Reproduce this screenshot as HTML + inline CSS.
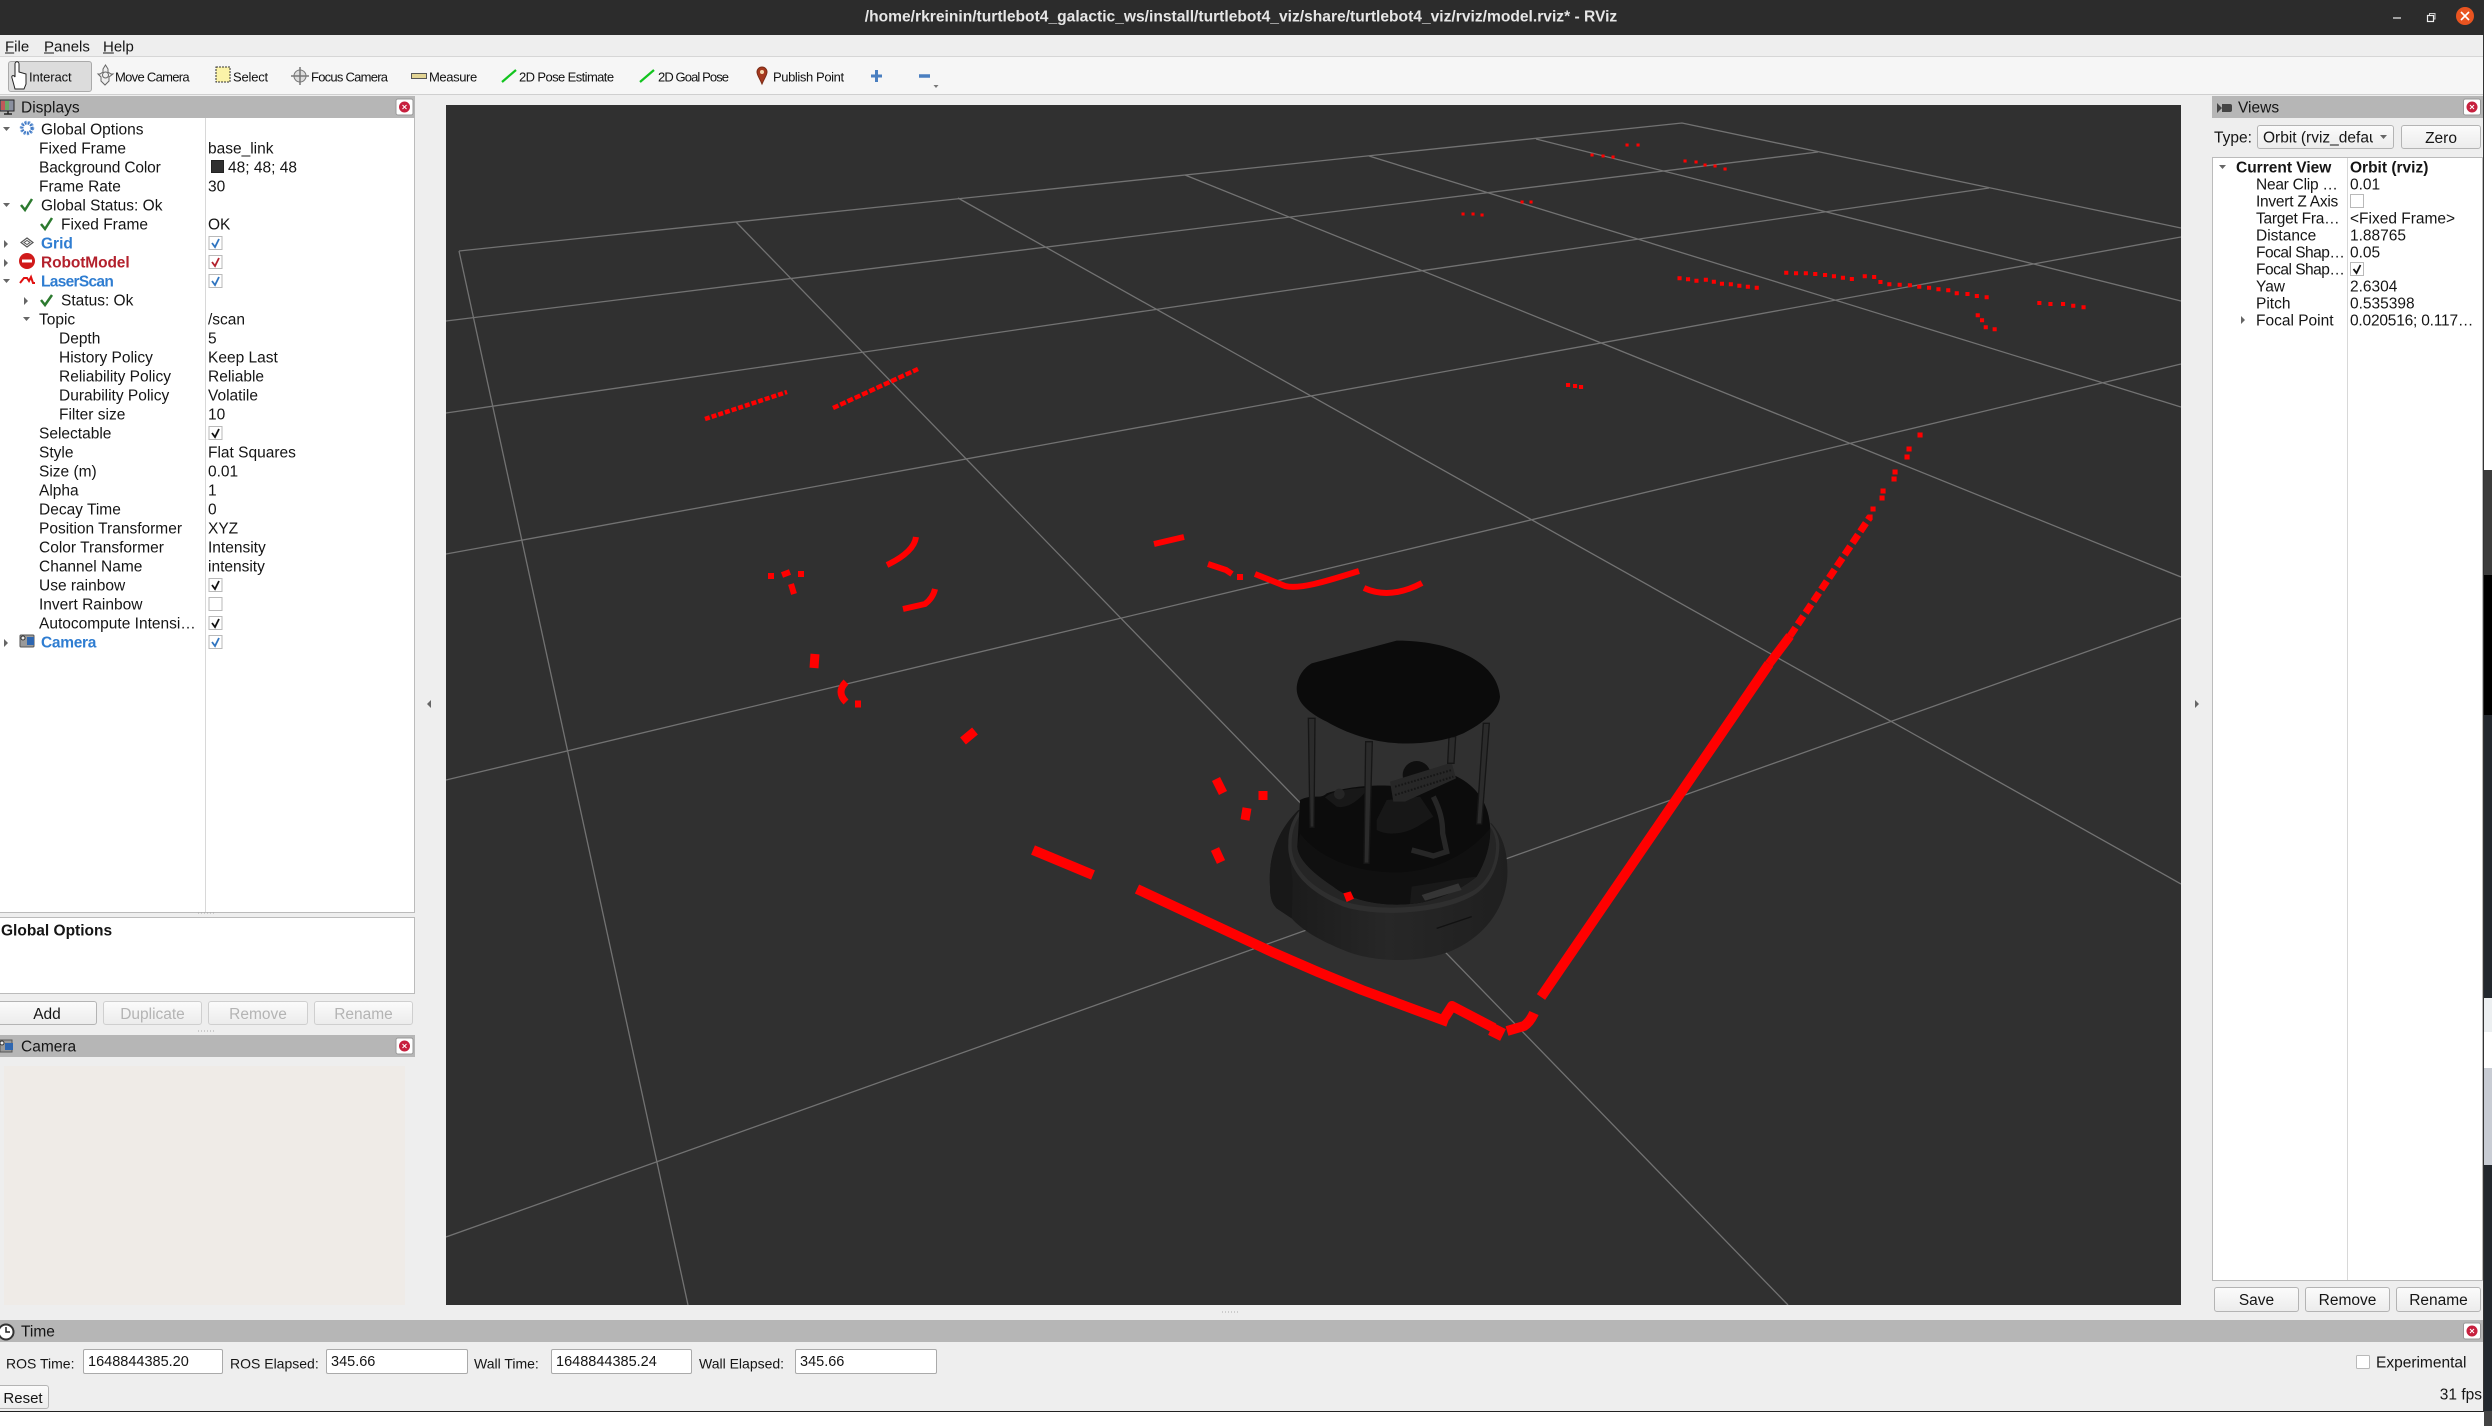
<!DOCTYPE html>
<html><head><meta charset="utf-8"><title>RViz</title>
<style>
html,body{margin:0;padding:0;background:#fff}
body{position:relative;width:2492px;height:1426px;overflow:hidden;font-family:"Liberation Sans",sans-serif}
.b{position:absolute}
.t{position:absolute;white-space:nowrap;font:15.5px/18px "Liberation Sans",sans-serif;color:#151515;transform:translateY(1.5px)}
.s{font-size:13px;line-height:16px;color:#111}
.m{font-size:15px}
.bold{font-weight:bold}
.blue{color:#2f7dd1;font-weight:bold}
.red{color:#b3202c;font-weight:bold}
.btn{position:absolute;box-sizing:border-box;border:1px solid #b4b4b4;border-radius:3px;background:linear-gradient(#fbfbfb,#ececec);text-align:center;font:15.5px/25px "Liberation Sans",sans-serif;color:#151515}
.dis{color:#b4b4b4;border-color:#cfcfcf}
.fld{position:absolute;box-sizing:border-box;height:25px;border:1px solid #aaa;border-radius:2px;background:#fff;font:14.5px/24px "Liberation Sans",sans-serif;color:#151515;padding-left:4px}
.title{position:absolute;background:#b6b6b6}
</style></head><body>

<!-- window chrome backgrounds -->
<div class="b" style="left:0;top:0;width:2484px;height:35px;background:#2c2c2c"></div>
<div class="b" style="left:0;top:35px;width:2484px;height:1376px;background:#eeeeee"></div>
<div class="b" style="left:0;top:56px;width:2484px;height:1px;background:#d6d6d6"></div>
<div class="b" style="left:0;top:57px;width:2484px;height:37px;background:#f6f6f6"></div>
<div class="b" style="left:0;top:94px;width:2484px;height:1px;background:#cfcfcf"></div>
<div class="b" style="left:0;top:1411px;width:2484px;height:1px;background:#222"></div>
<div class="b" style="left:2483px;top:35px;width:1px;height:1377px;background:#333"></div>

<!-- right desktop strip -->
<div class="b" style="left:2484px;top:470px;width:8px;height:105px;background:#3c3c3c"></div>
<div class="b" style="left:2484px;top:575px;width:8px;height:140px;background:#000"></div>
<div class="b" style="left:2484px;top:715px;width:8px;height:283px;background:#23282e"></div>
<div class="b" style="left:2484px;top:998px;width:8px;height:34px;background:#eceff1"></div>
<div class="b" style="left:2484px;top:1032px;width:8px;height:36px;background:#fff"></div>
<div class="b" style="left:2484px;top:1068px;width:8px;height:97px;background:#c8ccd4"></div>
<div class="b" style="left:2484px;top:1165px;width:8px;height:246px;background:#23282e"></div>
<div class="b" style="left:2484px;top:1411px;width:8px;height:15px;background:#444"></div>

<!-- toolbar active button -->
<div class="b" style="left:8px;top:61px;width:84px;height:31px;box-sizing:border-box;background:#dcdcdc;border:1px solid #aaa;border-radius:3px"></div>

<!-- 3D view -->
<div class="b" style="left:446px;top:105px;width:1735px;height:1200px;background:#303030"></div>

<!-- left panel -->
<div class="title" style="left:0;top:96px;width:415px;height:22px"></div>
<div class="b" style="left:0;top:118px;width:415px;height:795px;box-sizing:border-box;background:#fff;border-right:1px solid #bbb;border-bottom:1px solid #bbb"></div>
<div class="b" style="left:205px;top:118px;width:1px;height:794px;background:#d8d8d8"></div>
<div class="b" style="left:0;top:917px;width:415px;height:77px;box-sizing:border-box;background:#fff;border:1px solid #bbb;border-left:0"></div>
<div class="title" style="left:0;top:1035px;width:415px;height:22px"></div>
<div class="b" style="left:4px;top:1066px;width:401px;height:239px;background:#efebe7"></div>

<!-- right panel -->
<div class="title" style="left:2212px;top:96px;width:271px;height:22px"></div>
<div class="b" style="left:2212px;top:157px;width:271px;height:1124px;box-sizing:border-box;background:#fff;border:1px solid #bbb"></div>
<div class="b" style="left:2347px;top:158px;width:1px;height:1122px;background:#d8d8d8"></div>

<!-- time panel -->
<div class="title" style="left:0;top:1320px;width:2483px;height:22px"></div>

<!-- all graphics -->
<svg class="b" style="left:0;top:0" width="2492" height="1426" viewBox="0 0 2492 1426">
<defs>
<clipPath id="v"><rect x="446" y="105" width="1735" height="1200"/></clipPath>
<linearGradient id="g1" x1="0" x2="1" y1="0" y2="0"><stop offset="0" stop-color="#191919"/><stop offset=".5" stop-color="#272727"/><stop offset="1" stop-color="#1f1f1f"/></linearGradient>
</defs>
<g clip-path="url(#v)">
<g stroke="#727272" stroke-width="1.3" fill="none">
<path d="M459 251L1682 123L2181 228"/>
<path d="M446 321L1818 152"/>
<path d="M446 413L1989 188"/>
<path d="M446 554L2181 237"/>
<path d="M446 780L2181 364"/>
<path d="M446 1237L2181 618"/>
<path d="M459 251L688 1305"/>
<path d="M736 222L1788 1305"/>
<path d="M958 198L2181 884"/>
<path d="M1185 175L2181 577"/>
<path d="M1369 156L2181 407"/>
<path d="M1536 139L2181 301"/>
</g>

<!-- robot -->
<g transform="translate(1220 620) scale(.33333)">
<path d="M150 800C145 720 165 640 235 570L815 610C850 650 865 700 862 770C855 870 790 950 700 990C610 1030 460 1030 370 990C310 965 250 935 215 895L170 865C155 850 150 830 150 800Z" fill="url(#g1)"/>
<path d="M150 800C145 720 165 640 235 570L250 600C215 640 205 680 215 760L218 790L215 895L170 865C155 850 150 830 150 800Z" fill="#181818"/>
<path d="M205 670C200 740 250 810 370 860C480 895 680 880 770 820C820 785 840 720 838 670C835 640 820 620 810 610L240 570C215 600 205 630 205 670Z" fill="#2f2f2f"/>
<path d="M215 670C212 735 260 800 375 845C480 878 670 865 765 808C812 775 830 720 828 670C825 640 815 625 805 615L245 578C225 605 215 635 215 670Z" fill="#252525"/>
<path d="M232 680L240 540C280 520 300 540 320 520C400 495 480 495 520 498L700 465C760 490 800 540 808 600C815 640 810 700 770 770C720 810 650 845 570 852C480 860 390 840 340 800C280 760 235 720 232 680Z" fill="#0c0c0c"/>
<path d="M240 640C300 720 420 760 540 757C650 752 750 700 810 625C812 670 800 720 770 770C720 810 650 845 570 852C480 860 390 840 340 800C280 760 235 720 232 680Z" fill="#101010"/>
<path d="M570 852L575 800L730 775L770 770C720 810 650 845 570 852Z" fill="#191919"/>
<path d="M605 825L715 790L725 810L615 842Z" fill="#353535"/>
<path d="M650 925L755 890" stroke="#111" stroke-width="4" fill="none"/>
<path d="M315 532C340 510 400 505 445 503C425 535 385 568 350 560Z" fill="#181818"/>
<circle cx="358" cy="522" r="16" fill="#252525"/>
<circle cx="590" cy="465" r="42" fill="#0f0f0f"/>
<path d="M470 600L500 540L600 530L640 590L600 615C560 640 510 650 470 630Z" fill="#171717"/>
<path d="M510 485L695 428L708 475L555 545L520 545Z" fill="#272727"/>
<path d="M525 500L695 450M525 525L700 470" stroke="#161616" stroke-width="6" stroke-dasharray="5 5" fill="none"/>
<path d="M640 530C660 570 668 600 668 640L680 695L640 708L575 690" stroke="#272727" stroke-width="16" fill="none"/>
<g fill="#2b2b2b" stroke="#161616" stroke-width="4">
<path d="M265 295L285 295L282 622L270 622Z"/>
<path d="M437 365L457 365L447 730L432 730Z"/>
<path d="M687 350L707 350L702 430L683 430Z"/>
<path d="M790 310L808 310L785 612L770 612Z"/>
</g>
<path d="M275 130L530 62C610 62 680 75 740 105C800 135 835 175 840 230C838 270 790 310 730 340C670 365 600 372 540 370C460 368 380 340 320 305C270 280 230 250 230 205C232 170 250 145 275 130Z" fill="#0b0b0b"/>
<path d="M370 820L392 814L402 836L380 846Z" fill="#f00"/>
</g>

<!-- laser thick -->
<g stroke="#f00" fill="none" stroke-linejoin="round">
<path stroke-width="10" d="M1033 850L1093 875"/>
<path stroke-width="10" d="M1137 889L1272 952L1318 972L1362 990L1448 1022"/>
<path stroke-width="10" d="M1445 1017L1452 1006L1494 1028"/>
<path stroke-width="13" d="M1491 1029L1503 1035"/>
<path stroke-width="10" d="M1507 1031L1524 1026Q1530 1022 1534 1013"/>
<path stroke-width="10" d="M1541 997L1769 664"/>
<path stroke-width="9" d="M1769 664L1790 636"/>
<path stroke-width="7" stroke-dasharray="10 4" d="M1790 636L1870 517"/>
<path stroke-width="6" d="M916 537Q914 552 887 565"/>
<path stroke-width="6" d="M768 576H774M782 575L790 572M798 574H804M791 584L794 594"/>
<path stroke-width="6" d="M903 609L925 604Q933 598 935 589"/>
<path stroke-width="9" d="M815 654L814 668"/>
<path stroke-width="7" d="M846 682Q836 692 846 702"/>
<path stroke-width="7" d="M855 704H861"/>
<path stroke-width="9" d="M975 731L963 741"/>
<path stroke-width="9" d="M1216 779L1223 793M1263 791V800M1247 808L1245 820M1215 849L1221 862"/>
<path stroke-width="6" d="M1154 544L1184 537"/>
<path stroke-width="6" d="M1208 564L1226 570L1232 574"/>
<path stroke-width="6" d="M1237 577H1243"/>
<path stroke-width="6" d="M1255 574L1285 586C1300 590 1330 580 1359 571"/>
<path stroke-width="6" d="M1364 588Q1390 600 1422 583"/>
<path stroke-width="4.500" stroke-dasharray="5 2" d="M705 419L787 392"/>
<path stroke-width="4.500" stroke-dasharray="6 2" d="M833 408L918 369"/>
</g>
<!-- laser dots -->
<path stroke="#f00" fill="none" stroke-linecap="square" stroke-width="3" d="M1627 145h.1M1638 145h.1M1592 155h.1M1603 156h.1M1613 157h.1M1685 161h.1M1696 162h.1M1705 165h.1M1715 166h.1M1725 169h.1M1522 202h.1M1531 202h.1M1463 214h.1M1473 214h.1M1482 215h.1"/>
<path stroke="#f00" fill="none" stroke-linecap="square" stroke-width="4" d="M1568 385h.1M1575 386h.1M1581 387h.1M1679.5 278.3h.1M1688 279.3h.1M1696.4 280.7h.1M1705.8 279.7h.1M1713.8 281.7h.1M1721.9 283.7h.1M1730.8 284.3h.1M1739.3 285.7h.1M1747.8 286.7h.1M1756.7 287.7h.1M1786.2 272.7h.1M1796 273.3h.1M1805.8 273.3h.1M1815.2 274h.1M1825 275h.1M1833.9 276.3h.1M1842.9 277.7h.1M1851.8 279h.1M1864.7 276.3h.1M1874.1 277h.1M1880.4 282h.1M1889.3 284.3h.1M1899.6 284.7h.1M1909.8 285.3h.1M1919.2 286.7h.1M1929 287.7h.1M1938.4 289.3h.1M1948.2 290.3h.1M1956.7 293.3h.1M1967.4 294h.1M1976.8 296h.1M1986.6 297.3h.1M1977.7 315.3h.1M1982 320.3h.1M1985.7 327.3h.1M1994.6 329.3h.1M2039.3 303h.1M2050.4 304h.1M2063 304h.1M2073.2 305.7h.1M2083.5 307.3h.1"/>
<path stroke="#f00" fill="none" stroke-linecap="square" stroke-width="5" d="M1920 435h.1M1909 449h.1M1907 457h.1M1895 472h.1M1894 479h.1M1883 491h.1M1882 498h.1M1873 509h.1M1870 517h.1"/>
</g>

<!-- window buttons -->
<path d="M2393 18H2401" stroke="#eee" stroke-width="1.2"/>
<rect x="2427.5" y="15.5" width="6" height="6" fill="none" stroke="#eee" stroke-width="1.2"/>
<path d="M2429.5 15V13.5H2435V19H2433.5" fill="none" stroke="#ccc"/>
<circle cx="2465" cy="16" r="9" fill="#e95420"/>
<path d="M2461 12L2469 20M2469 12L2461 20" stroke="#fff" stroke-width="1.6"/>

<!-- toolbar icons -->
<path d="M15 89L12 78C11 75 14 75 15 77V64C15 61 19 61 19 64V72L26 74V84L24 89Z" fill="#fff" stroke="#222" stroke-width="1"/>
<path d="M105.500 65L108 69V72L111 74H113L109 77V81L105 85L101 81V77L98 74H100L103 72V69Z" fill="#eee" stroke="#666"/>
<circle cx="105.500" cy="75" r="3" fill="none" stroke="#666"/>
<rect x="216" y="67" width="14" height="15" fill="#fbf3a8" stroke="#333" stroke-dasharray="2 1"/>
<circle cx="300" cy="76" r="6" fill="#ddd" stroke="#777"/>
<path d="M300 67V85M291 76H309" stroke="#777" stroke-width="1.5"/>
<rect x="411.500" y="73.500" width="15" height="5" fill="#e2d494" stroke="#555"/>
<path d="M502 82L516 70" stroke="#12c41e" stroke-width="2.2"/>
<path d="M640 82L654 70" stroke="#12c41e" stroke-width="2.2"/>
<path d="M762 84C759 77 757 75 757 72A5 5 0 0 1 767 72C767 75 765 77 762 84Z" fill="#a5391e" stroke="#7a2c16"/>
<circle cx="762" cy="72" r="2" fill="#f4d9b0"/>
<path d="M871 76H882M876.500 70V82" stroke="#4a7fc0" stroke-width="3"/>
<path d="M919 76H930" stroke="#4a7fc0" stroke-width="3.500"/>
<path d="M933.500 85H938.500L936 88Z" fill="#777"/>

<!-- panel close buttons -->
<g>
<rect x="396" y="99" width="17" height="16" rx="2" fill="#fff" stroke="#999"/><circle cx="404.500" cy="107" r="5.500" fill="#c7203e"/>
<rect x="396" y="1038" width="17" height="16" rx="2" fill="#fff" stroke="#999"/><circle cx="404.500" cy="1046" r="5.500" fill="#c7203e"/>
<rect x="2463.500" y="99" width="17" height="16" rx="2" fill="#fff" stroke="#999"/><circle cx="2472" cy="107" r="5.500" fill="#c7203e"/>
<rect x="2463.500" y="1323" width="17" height="16" rx="2" fill="#fff" stroke="#999"/><circle cx="2472" cy="1331" r="5.500" fill="#c7203e"/>
<path d="M402.500 105L406.500 109M406.500 105L402.500 109M402.500 1044L406.500 1048M406.500 1044L402.500 1048M2470 105L2474 109M2474 105L2470 109M2470 1329L2474 1333M2474 1329L2470 1333" stroke="#fff" stroke-width="1"/>
</g>

<!-- title icons -->
<rect x="0" y="100" width="14" height="11" fill="#8a8f9f" stroke="#222"/>
<rect x="1" y="101" width="4" height="9" fill="#c05a5a"/><rect x="5" y="101" width="4" height="9" fill="#6aa86a"/>
<path d="M4 114H12M8 111V114" stroke="#222" stroke-width="1.5"/>
<path d="M0 1040H12V1052H0Z" fill="#999" stroke="#555"/><rect x="5" y="1043" width="8" height="7" fill="#2e66b0"/><circle cx="2" cy="1043" r="2" fill="#eee" stroke="#333"/>
<path d="M2217 103L2222 108L2217 113ZM2222 104H2230Q2232 104 2232 106V110Q2232 112 2230 112H2222Z" fill="#444"/>
<circle cx="6" cy="1332" r="7.500" fill="#fff" stroke="#333" stroke-width="2"/>
<path d="M6 1327V1332H10" stroke="#222" fill="none" stroke-width="1.500"/>

<!-- tree arrows -->
<path fill="#666" d="M3 127H10L6.500 131ZM3 203H10L6.500 207ZM3 279H10L6.500 283ZM23 317H30L26.500 321ZM2219 165H2226L2222.500 169Z"/>
<path fill="#666" d="M4 240V248L8 244ZM4 259V267L8 263ZM4 639V647L8 643ZM24 297V305L28 301ZM2241 316V324L2245 320Z"/>

<!-- tree icons -->
<circle cx="27" cy="128" r="5" fill="none" stroke="#3f78c4" stroke-width="3" stroke-dasharray="2 1"/>
<circle cx="27" cy="128" r="6.500" fill="none" stroke="#6b9ad6" stroke-width="1.500" stroke-dasharray="2 2"/>
<path fill="none" stroke="#2c7a2f" stroke-width="2.500" d="M21 205L25 210L32 199M41 224L45 229L52 218M41 300L45 305L52 295"/>
<path d="M27 238L33 242.500L27 247L21 242.500Z" fill="none" stroke="#555" stroke-width="1.200"/>
<path d="M24 242.500L27 240.500L30 242.500L27 244.500Z" fill="none" stroke="#555"/>
<circle cx="27" cy="261" r="8" fill="#d01a1a"/><rect x="22" y="259.500" width="10" height="3" fill="#fff"/>
<path d="M20 283L24 278H27L29 281L31 277L33 283H35" fill="none" stroke="#e01010" stroke-width="2"/>
<rect x="20" y="635" width="14" height="12" rx="1" fill="#9a9a9a" stroke="#555"/>
<rect x="27" y="637" width="7" height="8" fill="#2e66b0"/>
<circle cx="23" cy="638" r="2" fill="#eee" stroke="#333"/>

<!-- color swatch -->
<rect x="211.500" y="160.500" width="12" height="12" fill="#303030" stroke="#222"/>

<!-- checkboxes -->
<g fill="#fff" stroke="#b9b9b9">
<rect x="209" y="236.500" width="13" height="13"/><rect x="209" y="255.500" width="13" height="13"/><rect x="209" y="274.500" width="13" height="13"/>
<rect x="209" y="426.500" width="13" height="13"/><rect x="209" y="578.500" width="13" height="13"/><rect x="209" y="597.500" width="13" height="13"/>
<rect x="209" y="616.500" width="13" height="13"/><rect x="209" y="635.500" width="13" height="13"/>
<rect x="2350.500" y="194.500" width="13" height="13"/><rect x="2350.500" y="262.500" width="13" height="13"/>
<rect x="2356.500" y="1355.500" width="13" height="13" rx="1"/>
</g>
<path fill="none" stroke="#2f74c0" stroke-width="1.800" d="M212 243L215 247L219 239M212 281L215 285L219 277M212 642L215 646L219 638"/>
<path fill="none" stroke="#b3202c" stroke-width="1.800" d="M212 262L215 266L219 258"/>
<path fill="none" stroke="#111" stroke-width="1.800" d="M212 433L215 437L219 429M212 585L215 589L219 581M212 623L215 627L219 619M2353.500 269L2356.500 273L2360.500 265"/>

<!-- handles -->
<path fill="#666" d="M431 700V708L427 704ZM2195 700V708L2199 704Z"/>
<path d="M198 913H214M198 1031H214M1222 1312H1240" stroke="#aaa" stroke-dasharray="1 2"/>

<!-- combo arrow -->
<path fill="#666" d="M2380 136H2387L2383.500 140Z"/>
</svg>

<!-- title bar text -->
<div class="t bold" style="left:0;top:7px;width:2482px;text-align:center;color:#e6e6e6;font-size:15.6px">/home/rkreinin/turtlebot4_galactic_ws/install/turtlebot4_viz/share/turtlebot4_viz/rviz/model.rviz* - RViz</div>

<!-- menu -->
<div class="t m" style="left:5px;top:37px"><u>F</u>ile</div>
<div class="t m" style="left:44px;top:37px"><u>P</u>anels</div>
<div class="t m" style="left:103px;top:37px"><u>H</u>elp</div>

<!-- toolbar -->
<div class="t s" style="left:29px;top:68px;letter-spacing:-.1px">Interact</div>
<div class="t s" style="left:115px;top:68px;letter-spacing:-.7px">Move Camera</div>
<div class="t s" style="left:233px;top:68px;letter-spacing:-.2px">Select</div>
<div class="t s" style="left:311px;top:68px;letter-spacing:-.75px">Focus Camera</div>
<div class="t s" style="left:429px;top:68px;letter-spacing:-.4px">Measure</div>
<div class="t s" style="left:519px;top:68px;letter-spacing:-.6px">2D Pose Estimate</div>
<div class="t s" style="left:658px;top:68px;letter-spacing:-.9px">2D Goal Pose</div>
<div class="t s" style="left:773px;top:68px;letter-spacing:-.4px">Publish Point</div>

<!-- panel titles -->
<div class="t" style="left:21px;top:98px">Displays</div>
<div class="t" style="left:21px;top:1037px">Camera</div>
<div class="t" style="left:2238px;top:98px">Views</div>
<div class="t" style="left:21px;top:1322px">Time</div>

<!-- displays tree -->
<div class="t" style="left:41px;top:120px">Global Options</div>
<div class="t" style="left:39px;top:139px">Fixed Frame</div><div class="t" style="left:208px;top:139px">base_link</div>
<div class="t" style="left:39px;top:158px;letter-spacing:-.15px">Background Color</div><div class="t" style="left:228px;top:158px">48; 48; 48</div>
<div class="t" style="left:39px;top:177px">Frame Rate</div><div class="t" style="left:208px;top:177px">30</div>
<div class="t" style="left:41px;top:196px">Global Status: Ok</div>
<div class="t" style="left:61px;top:215px">Fixed Frame</div><div class="t" style="left:208px;top:215px">OK</div>
<div class="t blue" style="left:41px;top:234px">Grid</div>
<div class="t red" style="left:41px;top:253px;letter-spacing:-.1px">RobotModel</div>
<div class="t blue" style="left:41px;top:272px;letter-spacing:-.7px">LaserScan</div>
<div class="t" style="left:61px;top:291px">Status: Ok</div>
<div class="t" style="left:39px;top:310px">Topic</div><div class="t" style="left:208px;top:310px">/scan</div>
<div class="t" style="left:59px;top:329px">Depth</div><div class="t" style="left:208px;top:329px">5</div>
<div class="t" style="left:59px;top:348px">History Policy</div><div class="t" style="left:208px;top:348px">Keep Last</div>
<div class="t" style="left:59px;top:367px">Reliability Policy</div><div class="t" style="left:208px;top:367px">Reliable</div>
<div class="t" style="left:59px;top:386px">Durability Policy</div><div class="t" style="left:208px;top:386px">Volatile</div>
<div class="t" style="left:59px;top:405px">Filter size</div><div class="t" style="left:208px;top:405px">10</div>
<div class="t" style="left:39px;top:424px">Selectable</div>
<div class="t" style="left:39px;top:443px">Style</div><div class="t" style="left:208px;top:443px">Flat Squares</div>
<div class="t" style="left:39px;top:462px">Size (m)</div><div class="t" style="left:208px;top:462px">0.01</div>
<div class="t" style="left:39px;top:481px">Alpha</div><div class="t" style="left:208px;top:481px">1</div>
<div class="t" style="left:39px;top:500px">Decay Time</div><div class="t" style="left:208px;top:500px">0</div>
<div class="t" style="left:39px;top:519px">Position Transformer</div><div class="t" style="left:208px;top:519px">XYZ</div>
<div class="t" style="left:39px;top:538px">Color Transformer</div><div class="t" style="left:208px;top:538px">Intensity</div>
<div class="t" style="left:39px;top:557px">Channel Name</div><div class="t" style="left:208px;top:557px">intensity</div>
<div class="t" style="left:39px;top:576px">Use rainbow</div>
<div class="t" style="left:39px;top:595px">Invert Rainbow</div>
<div class="t" style="left:39px;top:614px">Autocompute Intensi…</div>
<div class="t blue" style="left:41px;top:633px;letter-spacing:-.3px">Camera</div>

<!-- description -->
<div class="t bold" style="left:1px;top:921px">Global Options</div>

<!-- left buttons -->
<div class="btn" style="left:-3px;top:1001px;width:100px;height:24px">Add</div>
<div class="btn dis" style="left:103px;top:1001px;width:99px;height:24px">Duplicate</div>
<div class="btn dis" style="left:208px;top:1001px;width:100px;height:24px">Remove</div>
<div class="btn dis" style="left:314px;top:1001px;width:99px;height:24px">Rename</div>

<!-- views panel -->
<div class="t" style="left:2214px;top:128px">Type:</div>
<div class="btn" style="left:2257px;top:125px;width:137px;height:24px"></div>
<div class="t" style="left:2263px;top:128px;width:110px;overflow:hidden">Orbit (rviz_default_plugins)</div>
<svg class="b" style="left:2376px;top:132px" width="14" height="10"><path fill="#666" d="M4 3H11L7.500 7Z"/></svg>
<div class="btn" style="left:2401px;top:125px;width:80px;height:24px">Zero</div>

<div class="t bold" style="left:2236px;top:158px">Current View</div><div class="t bold" style="left:2350px;top:158px">Orbit (rviz)</div>
<div class="t" style="left:2256px;top:175px;letter-spacing:-.25px">Near Clip …</div><div class="t" style="left:2350px;top:175px">0.01</div>
<div class="t" style="left:2256px;top:192px;letter-spacing:-.25px">Invert Z Axis</div>
<div class="t" style="left:2256px;top:209px;letter-spacing:-.25px">Target Fra…</div><div class="t" style="left:2350px;top:209px">&lt;Fixed Frame&gt;</div>
<div class="t" style="left:2256px;top:226px">Distance</div><div class="t" style="left:2350px;top:226px">1.88765</div>
<div class="t" style="left:2256px;top:243px;letter-spacing:-.5px">Focal Shap…</div><div class="t" style="left:2350px;top:243px">0.05</div>
<div class="t" style="left:2256px;top:260px;letter-spacing:-.5px">Focal Shap…</div>
<div class="t" style="left:2256px;top:277px">Yaw</div><div class="t" style="left:2350px;top:277px">2.6304</div>
<div class="t" style="left:2256px;top:294px">Pitch</div><div class="t" style="left:2350px;top:294px">0.535398</div>
<div class="t" style="left:2256px;top:311px">Focal Point</div><div class="t" style="left:2350px;top:311px;letter-spacing:-.2px">0.020516; 0.117…</div>

<div class="btn" style="left:2214px;top:1287px;width:85px;height:25px">Save</div>
<div class="btn" style="left:2305px;top:1287px;width:85px;height:25px">Remove</div>
<div class="btn" style="left:2396px;top:1287px;width:85px;height:25px">Rename</div>

<!-- time bar -->
<div class="t" style="left:6px;top:1353px;font-size:14px">ROS Time:</div>
<div class="fld" style="left:83px;top:1349px;width:140px">1648844385.20</div>
<div class="t" style="left:230px;top:1353px;font-size:14px">ROS Elapsed:</div>
<div class="fld" style="left:326px;top:1349px;width:142px">345.66</div>
<div class="t" style="left:474px;top:1353px;font-size:14px">Wall Time:</div>
<div class="fld" style="left:551px;top:1349px;width:141px">1648844385.24</div>
<div class="t" style="left:699px;top:1353px;font-size:14px">Wall Elapsed:</div>
<div class="fld" style="left:795px;top:1349px;width:142px">345.66</div>
<div class="btn" style="left:-3px;top:1385px;width:52px;height:24px;font-size:15px">Reset</div>
<div class="t" style="left:2376px;top:1353px">Experimental</div>
<div class="t" style="left:2300px;width:182px;text-align:right;top:1385px">31 fps</div>

</body></html>
